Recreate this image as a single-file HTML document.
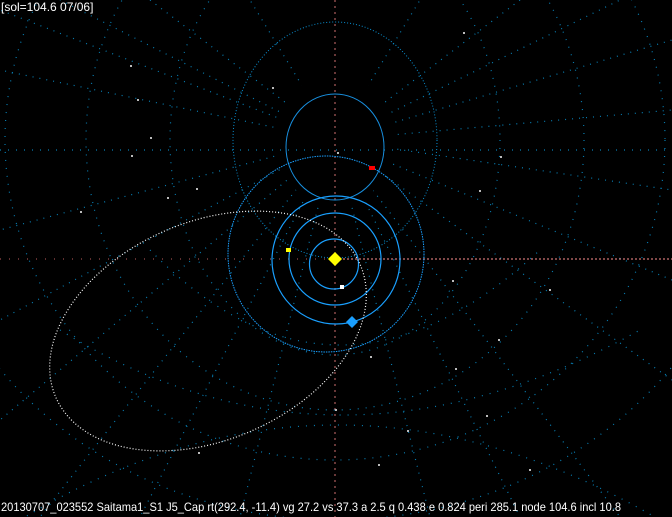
<!DOCTYPE html>
<html><head><meta charset="utf-8"><style>
html,body{margin:0;padding:0;background:#000;width:672px;height:517px;overflow:hidden}
svg{display:block}
text{font-family:"Liberation Sans",sans-serif;fill:#fff}
</style></head><body>
<svg width="672" height="517" viewBox="0 0 672 517" xmlns="http://www.w3.org/2000/svg">
<defs>
<mask id="m"><rect width="672" height="517" fill="#fff"/><ellipse cx="335" cy="140" rx="60" ry="66" fill="#000"/></mask>
</defs>
<rect width="672" height="517" fill="#000"/>
<!-- grid -->
<g fill="none" stroke="#0a9ee0" stroke-width="1.2" stroke-dasharray="1 7" opacity="0.8">
<ellipse cx="335" cy="140" rx="165" ry="215"/>
<ellipse cx="335" cy="140" rx="249" ry="270"/>
<ellipse cx="335" cy="140" rx="330" ry="320"/>
<ellipse cx="335" cy="140" rx="420" ry="380"/>
<path d="M0 150 H672"/>
<path d="M20 520 Q335 330 660 520"/>
<path d="M60 330 Q335 500 640 330"/>
<path d="M150 250 Q335 440 540 250"/>
<g stroke-dasharray="1 6" mask="url(#m)">
<path d="M335 140 L0 70 M335 140 L0 10 M335 140 L60 0 M335 140 L150 0 M335 140 L250 0 M335 140 L420 0 M335 140 L520 0 M335 140 L620 0 M335 140 L672 40 M335 140 L672 110 M335 140 L672 190 M335 140 L672 280 M335 140 L672 380 M335 140 L620 517 M335 140 L520 517 M335 140 L430 517 M335 140 L240 517 M335 140 L140 517 M335 140 L40 517 M335 140 L0 420 M335 140 L0 320 M335 140 L0 230"/>
</g>
</g>
<ellipse cx="335" cy="140" rx="102" ry="118" fill="none" stroke="#0a8fd0" stroke-width="1" stroke-dasharray="1 2"/>
<!-- axes -->
<path d="M335 0 V517" stroke="#d07070" stroke-width="1" stroke-dasharray="2 4"/>
<path d="M0 259 H335" stroke="#c06060" stroke-width="1" stroke-dasharray="1 8"/>
<path d="M335 259 H672" stroke="#ff9090" stroke-width="1" stroke-dasharray="2 2"/>
<!-- orbits -->
<g fill="none" stroke="#1aa0ff">
<ellipse cx="335" cy="147" rx="49" ry="53" stroke-width="1" stroke="#1890e0"/>
<circle cx="326" cy="254" r="98" stroke-width="1" stroke-dasharray="1.5 1"/>
<circle cx="336" cy="260" r="64" stroke-width="1.2"/>
<circle cx="335" cy="259" r="46" stroke-width="1.2"/>
<ellipse cx="334" cy="264" rx="24.5" ry="25" stroke-width="1.2"/>
</g>
<!-- comet orbit -->
<ellipse cx="208" cy="331" rx="166" ry="109" transform="rotate(-23.5 208 331)" fill="none" stroke="#fff" stroke-width="1.2" stroke-dasharray="1 2"/>
<!-- stars -->
<g fill="#bbb">
<rect x="130" y="65" width="2" height="2"/><rect x="272" y="87" width="2" height="2"/><rect x="137" y="99" width="2" height="2"/><rect x="150" y="137" width="2" height="2"/><rect x="131" y="155" width="2" height="2"/><rect x="196" y="188" width="2" height="2"/><rect x="167" y="197" width="2" height="2"/><rect x="80" y="211" width="2" height="2"/><rect x="463" y="32" width="2" height="2"/><rect x="500" y="156" width="2" height="2"/><rect x="479" y="190" width="2" height="2"/><rect x="549" y="289" width="2" height="2"/><rect x="498" y="339" width="2" height="2"/><rect x="370" y="356" width="2" height="2"/><rect x="455" y="368" width="2" height="2"/><rect x="407" y="430" width="2" height="2"/><rect x="486" y="415" width="2" height="2"/><rect x="378" y="464" width="2" height="2"/><rect x="198" y="452" width="2" height="2"/><rect x="529" y="469" width="2" height="2"/><rect x="335" y="409" width="2" height="2"/><rect x="452" y="280" width="2" height="2"/><rect x="337" y="152" width="2" height="2"/>
</g>
<!-- bodies -->
<rect x="369" y="166" width="6" height="4" fill="#f00"/>
<rect x="286" y="248" width="5" height="4" fill="#ff0"/>
<rect x="340" y="285" width="4" height="4" fill="#fff"/>
<path d="M335 252 L342 259 L335 266 L328 259 Z" fill="#ff0"/>
<path d="M352 316 L358 322 L352 328 L346 322 Z" fill="#1a9fff"/>
<text x="1" y="11" font-size="12">[sol=104.6 07/06]</text>
<text x="1" y="511" font-size="12" textLength="620" lengthAdjust="spacingAndGlyphs">20130707_023552 Saitama1_S1  J5_Cap rt(292.4, -11.4) vg 27.2 vs 37.3 a 2.5 q 0.438 e 0.824 peri 285.1 node 104.6 incl 10.8</text>
</svg>
</body></html>
